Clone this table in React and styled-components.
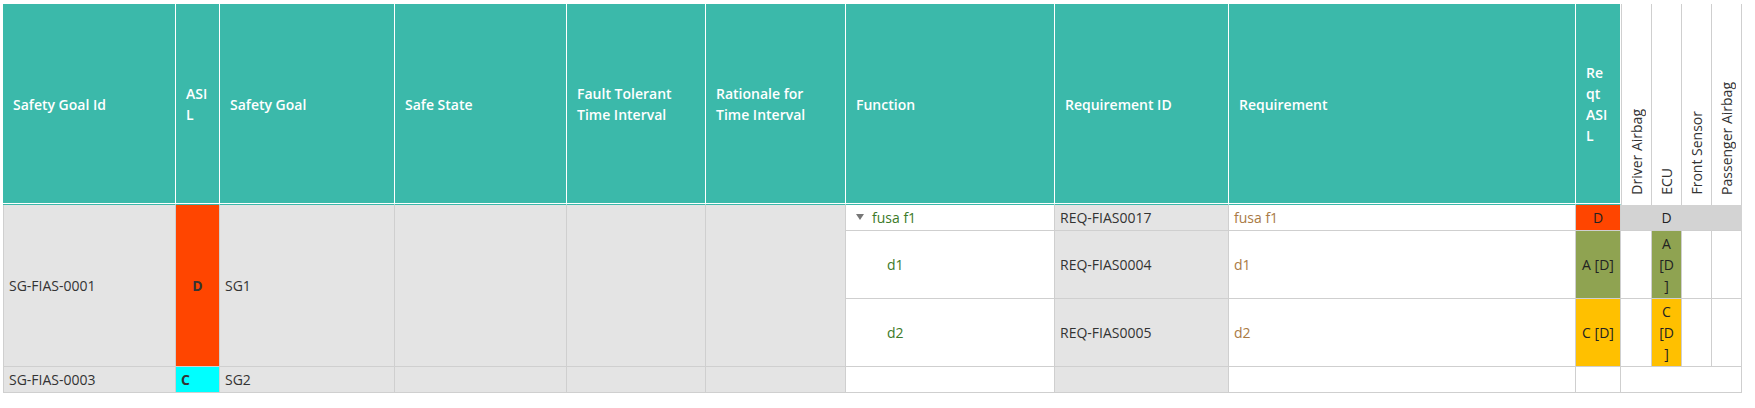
import React from "react";
import styled, { createGlobalStyle } from "styled-components";

const teal = "#3bb9aa";
const line = "#cfcfcf";
const grey = "#e4e4e4";
const red = "#ff4500";
const olive = "#8fa351";
const amber = "#ffc000";

const GlobalStyle = createGlobalStyle`
  body {
    margin: 0;
    background: #fff;
    font-family: "Open Sans", "DejaVu Sans", sans-serif;
    font-size: 14px;
  }
`;

const headers = [
  "Safety Goal Id",
  "ASIL",
  "Safety Goal",
  "Safe State",
  "Fault Tolerant Time Interval",
  "Rationale for Time Interval",
  "Function",
  "Requirement ID",
  "Requirement",
  "Reqt ASIL"
];

const parts = ["Driver Airbag", "ECU", "Front Sensor", "Passenger Airbag"];

const functions = [
  { name: "fusa f1", id: "REQ-FIAS0017", req: "fusa f1", asil: "D", bg: red, top: true },
  { name: "d1", id: "REQ-FIAS0004", req: "d1", asil: "A [D]", bg: olive },
  { name: "d2", id: "REQ-FIAS0005", req: "d2", asil: "C [D]", bg: amber }
];

const App = () => {
  return (
    <Page>
      <GlobalStyle />
      <Table>
        {headers.map((h, i) => (
          <HeadCell key={h} $col={i + 1}>
            {h}
          </HeadCell>
        ))}
        {parts.map((p, i) => (
          <PartHead key={p} $col={i + 11} $first={i === 0}>
            <PartLabel>{p}</PartLabel>
          </PartHead>
        ))}

        {/* safety goal SG1 */}
        <Cell $row="2 / span 3" $col={1} $bg={grey} $edge>
          SG-FIAS-0001
        </Cell>
        <Cell $row="2 / span 3" $col={2} $bg={red} $bold $center>
          D
        </Cell>
        <Cell $row="2 / span 3" $col={3} $bg={grey}>
          SG1
        </Cell>
        <Cell $row="2 / span 3" $col={4} $bg={grey} />
        <Cell $row="2 / span 3" $col={5} $bg={grey} />
        <Cell $row="2 / span 3" $col={6} $bg={grey} />

        {functions.map((f, i) => (
          <React.Fragment key={f.id}>
            <Cell $row={i + 2} $col={7} $color="#3c7a28" $indent={f.top ? 10 : 41}>
              {f.top && <Caret />}
              {f.name}
            </Cell>
            <Cell $row={i + 2} $col={8} $bg={grey}>
              {f.id}
            </Cell>
            <Cell $row={i + 2} $col={9} $color="#a97a45">
              {f.req}
            </Cell>
            <Cell $row={i + 2} $col={10} $bg={f.bg} $color="#222" $center>
              {f.asil}
            </Cell>
            {parts.map((p, j) =>
              f.top ? (
                <MatrixCell key={p} $row={i + 2} $col={j + 11} $bg="#d3d3d3" $flat>
                  {j === 1 ? f.asil : ""}
                </MatrixCell>
              ) : (
                <MatrixCell key={p} $row={i + 2} $col={j + 11} $bg={j === 1 ? f.bg : "#fff"}>
                  {j === 1 ? f.asil : ""}
                </MatrixCell>
              )
            )}
          </React.Fragment>
        ))}

        {/* safety goal SG2 */}
        <Cell $row={5} $col={1} $bg={grey} $edge>
          SG-FIAS-0003
        </Cell>
        <Cell $row={5} $col={2} $bg="#00ffff" $bold>
          C
        </Cell>
        <Cell $row={5} $col={3} $bg={grey}>
          SG2
        </Cell>
        <Cell $row={5} $col={4} $bg={grey} />
        <Cell $row={5} $col={5} $bg={grey} />
        <Cell $row={5} $col={6} $bg={grey} />
        <Cell $row={5} $col={7} />
        <Cell $row={5} $col={8} $bg={grey} />
        <Cell $row={5} $col={9} />
        <Cell $row={5} $col={10} />
        <MatrixCell $row={5} $col="11 / span 4" />
      </Table>
    </Page>
  );
};

export default App;

const Page = styled.div`
  padding: 4px 0 0 3px;
`;

const Table = styled.div`
  display: grid;
  grid-template-columns: 173px 44px 175px 172px 139px 140px 209px 174px 347px 45px 31px 30px 30px 30px;
  grid-template-rows: 201px 26px 68px 68px 26px;
  width: max-content;
`;

const HeadCell = styled.div`
  grid-row: 1;
  grid-column: ${({ $col }) => $col};
  display: flex;
  align-items: center;
  padding: 0 10px;
  background: ${teal};
  color: #fff;
  font-weight: 600;
  line-height: 21px;
  border-right: 1px solid #fff;
  border-bottom: 1px solid ${teal};
  box-shadow: inset 0 -1px 0 #fff;
  overflow-wrap: anywhere;
  min-width: 0;
`;

const PartHead = styled.div`
  grid-row: 1;
  grid-column: ${({ $col }) => $col};
  display: flex;
  align-items: flex-end;
  justify-content: center;
  padding-bottom: 10px;
  background: #fff;
  border-right: 1px solid ${line};
  border-left: ${({ $first }) => ($first ? `1px solid ${line}` : "none")};
`;

const PartLabel = styled.span`
  writing-mode: vertical-rl;
  transform: rotate(180deg);
  white-space: nowrap;
  color: #333;
  line-height: 20px;
`;

const Cell = styled.div`
  grid-row: ${({ $row }) => $row};
  grid-column: ${({ $col }) => $col};
  display: flex;
  align-items: center;
  justify-content: ${({ $center }) => ($center ? "center" : "flex-start")};
  text-align: ${({ $center }) => ($center ? "center" : "left")};
  padding: 0 5px 0 ${({ $indent }) => $indent || 5}px;
  background: ${({ $bg }) => $bg || "#fff"};
  color: ${({ $color }) => $color || "#333"};
  font-weight: ${({ $bold }) => ($bold ? 700 : 400)};
  line-height: 21px;
  border-right: 1px solid ${line};
  border-bottom: 1px solid ${line};
  border-left: ${({ $edge }) => ($edge ? `1px solid ${line}` : "none")};
  overflow-wrap: anywhere;
  min-width: 0;
`;

const MatrixCell = styled.div`
  grid-row: ${({ $row }) => $row};
  grid-column: ${({ $col }) => $col};
  display: flex;
  align-items: center;
  justify-content: center;
  text-align: center;
  padding: 0 6px;
  background: ${({ $bg }) => $bg || "#fff"};
  color: #222;
  line-height: 21px;
  border-right: 1px solid ${({ $flat, $bg }) => ($flat ? $bg : line)};
  border-bottom: 1px solid ${line};
  overflow-wrap: anywhere;
  min-width: 0;
`;

const Caret = styled.span`
  width: 0;
  height: 0;
  margin: 0 8px 2px 0;
  border-left: 4px solid transparent;
  border-right: 4px solid transparent;
  border-top: 6px solid #777;
`;
